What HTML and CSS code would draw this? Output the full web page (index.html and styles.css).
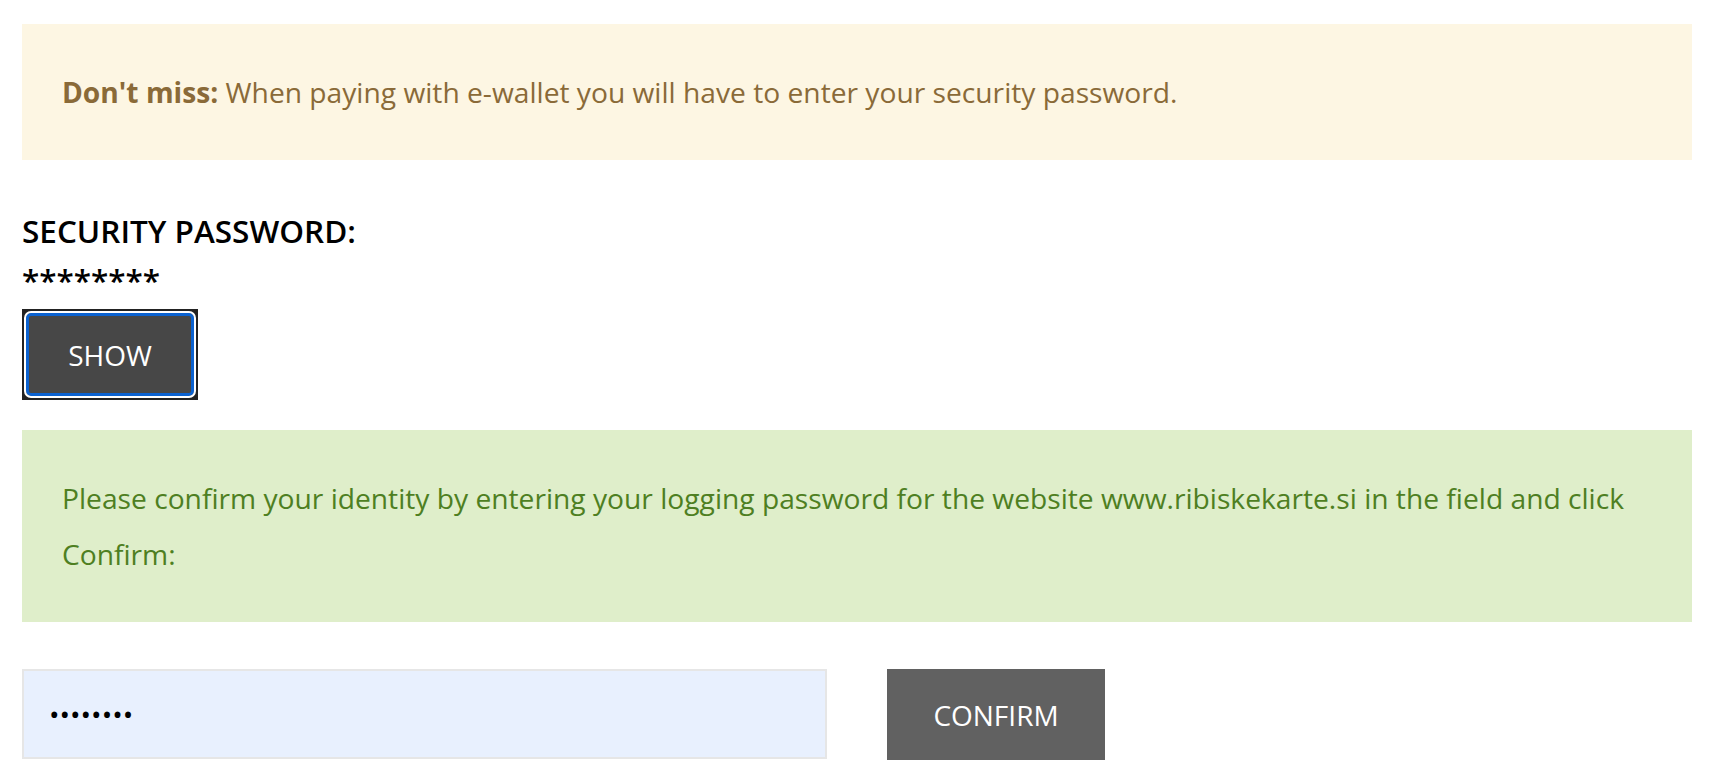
FILE: index.html
```html
<!DOCTYPE html>
<html lang="en">
<head>
  <meta charset="UTF-8" />
  <meta name="viewport" content="width=device-width, initial-scale=1.0" />
  <title>E-wallet - Security Password</title>
  <link rel="stylesheet" href="styles.css">
</head>
<body>
  <main class="page">
    <div class="alert alert-warning">
      <strong>Don't miss:</strong> When paying with e-wallet you will have to enter your security password.
    </div>

    <div class="security">
      <div class="security-label">SECURITY PASSWORD:</div>
      <div class="security-value">********</div>
      <span class="show-wrap"><button type="button" class="btn-show">SHOW</button></span>
    </div>

    <div class="alert alert-success">
      Please confirm your identity by entering your logging password for the website www.ribiskekarte.si in the field and click Confirm:
    </div>

    <form class="confirm-form">
      <input type="password" class="confirm-input" value="12345678" />
      <button type="submit" class="btn-confirm">CONFIRM</button>
    </form>
  </main>
</body>
</html>
```

FILE: styles.css
```css
body {
  margin: 0;
  font-family: 'Open Sans', 'Noto Sans', sans-serif;
  background: #fff;
  color: #000;
}
.page {
  padding: 24px 22px 0 22px;
}
.alert {
  padding: 40px 40px;
  font-size: 28.2px;
  line-height: 56px;
}
.alert-warning {
  background: #fdf6e3;
  color: #8a6a38;
}
.alert-success {
  background: #dfeeca;
  color: #4e7f22;
}
.security {
  margin: 51px 0 30px 0;
  font-size: 31.5px;
  font-weight: 600;
  line-height: 40px;
}
.security-value {
  line-height: 58px;
}
.show-wrap {
  display: inline-flex;
  background: #222;
  padding: 2px;
}
.btn-show {
  width: 172px;
  height: 87px;
  border: 2px solid #fff;
  border-radius: 7px;
  background: #474747;
  box-shadow: inset 0 0 0 3px #0b62d0;
  color: #fff;
  font-family: inherit;
  font-size: 28px;
  font-weight: 400;
  cursor: pointer;
}
.confirm-form {
  display: flex;
  gap: 60px;
  margin-top: 47px;
}
.confirm-input {
  box-sizing: border-box;
  width: 805px;
  height: 90px;
  padding: 0 25px;
  border: 2px solid #e6e6e6;
  background: #e8f0fe;
  font-family: inherit;
  font-size: 28px;
  outline: none;
}
.btn-confirm {
  width: 218px;
  height: 91px;
  border: none;
  background: #616161;
  color: #fff;
  font-family: inherit;
  font-size: 28px;
  cursor: pointer;
}
```
